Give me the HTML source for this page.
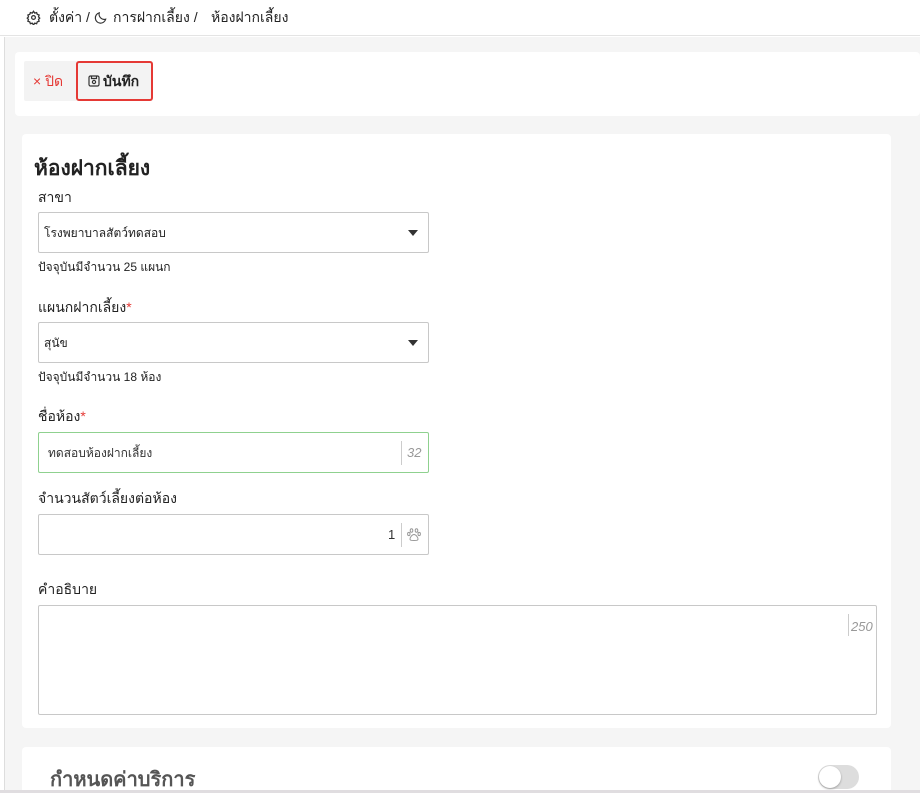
<!DOCTYPE html>
<html><head><meta charset="utf-8"><style>
*{box-sizing:border-box;margin:0;padding:0}
body{width:920px;height:793px;overflow:hidden;background:#fff;font-family:"Liberation Sans","Noto Sans CJK SC",sans-serif;color:#222;position:relative}
.top{position:absolute;left:0;top:0;width:920px;height:36px;background:#fff;border-bottom:1px solid #e4e4e4;font-size:14px}
.top span{position:absolute;top:7px}
.gray{position:absolute;left:4px;top:37px;width:916px;height:756px;background:#f5f5f5;border-left:1px solid #ddd}
.card{position:absolute;background:#fff;border-radius:4px}
.abs{position:absolute}
.lbl{position:absolute;left:38px;font-size:14px;color:#222}
.help{position:absolute;left:38px;font-size:12px;color:#222}
.inp{position:absolute;left:38px;width:391px;height:41px;border:1px solid #c8c8c8;border-radius:2px;background:#fff;font-size:12px}
.req{color:#e53935}
.arrow{position:absolute;right:10px;top:17px;width:0;height:0;border-left:5px solid transparent;border-right:5px solid transparent;border-top:6px solid #333}
.sep{position:absolute;top:8px;width:1px;height:24px;background:#ccc}
</style></head><body>
<div class="top">
<svg class="abs" style="left:26px;top:10px" width="15" height="15" viewBox="0 0 24 24" fill="none" stroke="#333" stroke-width="2"><circle cx="12" cy="12" r="3"/><path d="M12 2l2 3 3-1 1 3 3 1-1 3 2 2-2 2 1 3-3 1-1 3-3-1-2 3-2-3-3 1-1-3-3-1 1-3-2-2 2-2-1-3 3-1 1-3 3 1z"/></svg>
<span style="left:49px">ตั้งค่า /</span>
<svg class="abs" style="left:94px;top:10px" width="14" height="15" viewBox="0 0 24 24" fill="none" stroke="#333" stroke-width="2"><path d="M20 15A9 9 0 0 1 9 4a9 9 0 1 0 11 11z"/></svg>
<span style="left:113px">การฝากเลี้ยง /</span>
<span style="left:211px">ห้องฝากเลี้ยง</span>
</div>
<div class="gray"></div>
<div class="card" style="left:15px;top:52px;width:905px;height:64px"></div>
<div class="abs" style="left:24px;top:61px;width:129px;height:40px;background:#f3f3f3;border-radius:2px"></div>
<div class="abs" style="left:33px;top:71px;font-size:14px;color:#e53935">× ปิด</div>
<div class="abs" style="left:76px;top:61px;width:77px;height:40px;border:2px solid #e53935;border-radius:3px;background:#f3f3f3"></div>
<svg class="abs" style="left:88px;top:75px" width="12" height="12" viewBox="0 0 12 12" fill="none" stroke="#333" stroke-width="1.2"><rect x="1" y="1" width="10" height="10" rx="1.5"/><circle cx="6" cy="7" r="1.6"/><path d="M3.5 1v2.5h5V1"/></svg>
<div class="abs" style="left:103px;top:71px;font-size:14px;font-weight:bold">บันทึก</div>

<div class="card" style="left:22px;top:134px;width:869px;height:594px"></div>
<div class="abs" style="left:34px;top:152px;font-size:21px;font-weight:bold">ห้องฝากเลี้ยง</div>
<div class="lbl" style="top:187px">สาขา</div>
<div class="inp" style="top:212px"><span class="abs" style="left:5px;top:11px">โรงพยาบาลสัตว์ทดสอบ</span><div class="arrow"></div></div>
<div class="help" style="top:258px">ปัจจุบันมีจำนวน 25 แผนก</div>
<div class="lbl" style="top:297px">แผนกฝากเลี้ยง<span class="req">*</span></div>
<div class="inp" style="top:322px"><span class="abs" style="left:5px;top:11px">สุนัข</span><div class="arrow"></div></div>
<div class="help" style="top:368px">ปัจจุบันมีจำนวน 18 ห้อง</div>
<div class="lbl" style="top:406px">ชื่อห้อง<span class="req">*</span></div>
<div class="inp" style="top:432px;border-color:#8fd18f"><span class="abs" style="left:9px;top:11px;color:#333">ทดสอบห้องฝากเลี้ยง</span><div class="sep" style="left:362px"></div><span class="abs" style="left:368px;top:12px;font-style:italic;color:#999;font-size:13px">32</span></div>
<div class="lbl" style="top:488px">จำนวนสัตว์เลี้ยงต่อห้อง</div>
<div class="inp" style="top:514px"><span class="abs" style="left:349px;top:12px;font-size:13px;color:#333">1</span><div class="sep" style="left:362px"></div>
<svg class="abs" style="left:368px;top:13px" width="14" height="13" viewBox="0 0 14 13" fill="none" stroke="#999" stroke-width="1"><ellipse cx="4.5" cy="2.5" rx="1.3" ry="1.8"/><ellipse cx="9.5" cy="2.5" rx="1.3" ry="1.8"/><ellipse cx="1.8" cy="6" rx="1.2" ry="1.6"/><ellipse cx="12.2" cy="6" rx="1.2" ry="1.6"/><path d="M7 6.5c-2 0-4 3-4 4.5s1.5 1.5 4 1.5 4 0 4-1.5-2-4.5-4-4.5z"/></svg></div>
<div class="lbl" style="top:579px">คำอธิบาย</div>
<div class="inp" style="top:605px;width:839px;height:110px"><div class="sep" style="left:809px;top:8px;height:22px"></div><span class="abs" style="left:812px;top:13px;font-style:italic;color:#999;font-size:13px">250</span></div>

<div class="card" style="left:22px;top:747px;width:869px;height:60px"></div>
<div class="abs" style="left:50px;top:763px;font-size:20px;font-weight:bold;color:#555">กำหนดค่าบริการ</div>
<div class="abs" style="left:818px;top:765px;width:41px;height:24px;border-radius:12px;background:#ddd"></div>
<div class="abs" style="left:819px;top:766px;width:22px;height:22px;border-radius:50%;background:#fff;box-shadow:0 1px 2px rgba(0,0,0,.3)"></div>
<div class="abs" style="left:0;top:790px;width:920px;height:3px;background:#e0dde0"></div>
</body></html>
